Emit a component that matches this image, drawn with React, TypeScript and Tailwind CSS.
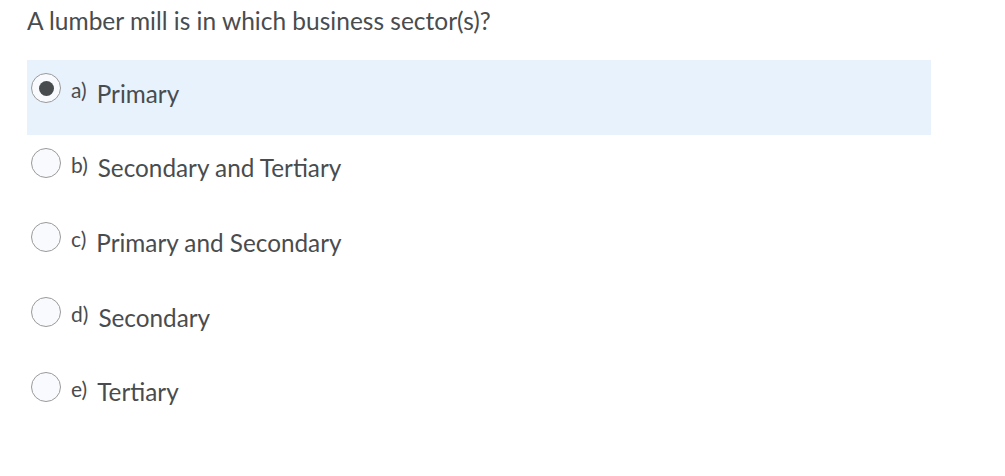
const options = [
  { key: "a)", text: "Primary" },
  { key: "b)", text: "Secondary and Tertiary" },
  { key: "c)", text: "Primary and Secondary" },
  { key: "d)", text: "Secondary" },
  { key: "e)", text: "Tertiary" },
];

export default function App() {
  const selected = 0;

  return (
    <main className="min-h-screen bg-white font-['Lato',sans-serif] text-[#494c4e]">
      <div className="pl-[27px] pr-[74px] pt-[6px]">
        <h1 className="text-[24.5px] leading-[30px] font-normal">
          A lumber mill is in which business sector(s)?
        </h1>

        <div className="mt-[24px] flex flex-col">
          {options.map((o, i) => {
            const checked = i === selected;
            return (
              <label
                key={o.key}
                className={`flex h-[74.6px] items-center pl-[4px] ${checked ? "bg-[#e8f2fc]" : ""}`}
              >
                <span className="-mt-[18px] flex h-[30px] w-[30px] shrink-0 items-center justify-center rounded-full border border-[#9a9a9a] bg-[#f9fafe]">
                  {checked && <span className="h-[15px] w-[15px] rounded-full bg-[#494c4e]" />}
                </span>
                <span className="ml-[10px] -mt-[14px] text-[21px] leading-[28px]">{o.key}</span>
                <span className="ml-[10px] -mt-[7px] text-[24.3px] leading-[32px]">{o.text}</span>
              </label>
            );
          })}
        </div>
      </div>
    </main>
  );
}
